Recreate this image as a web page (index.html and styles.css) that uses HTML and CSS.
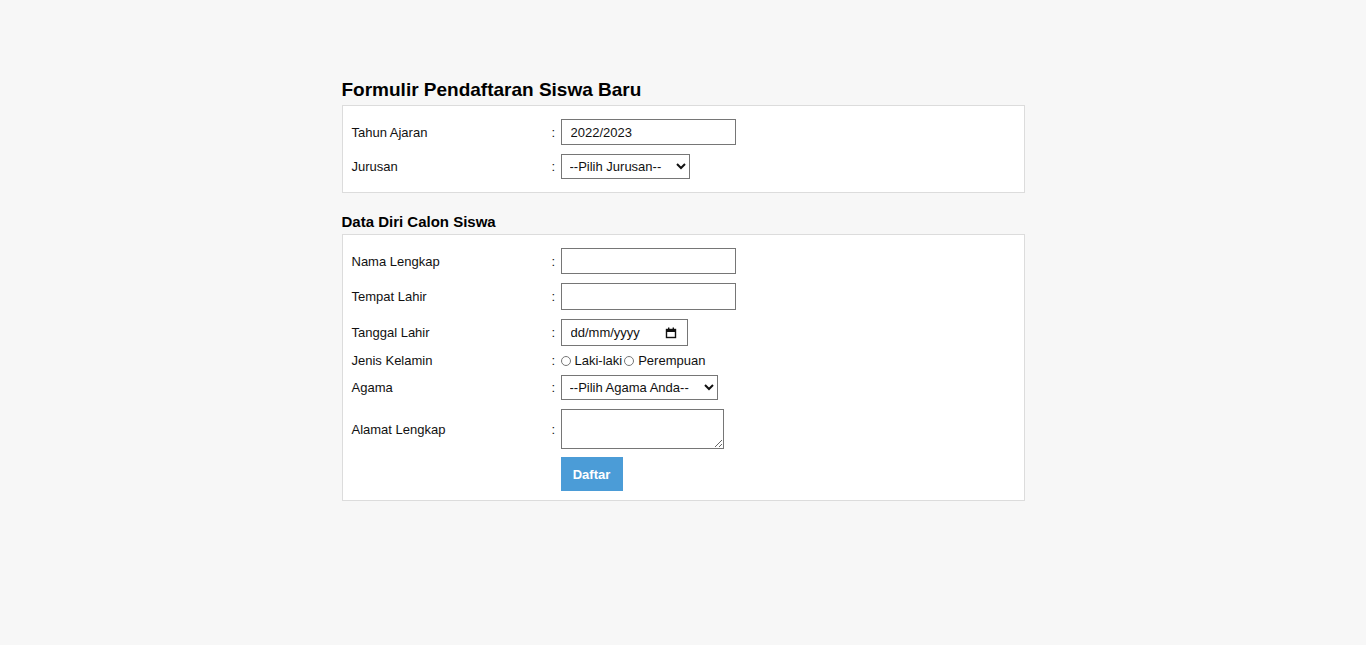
FILE: index.html
```html
<!DOCTYPE html>
<html lang="id">
<head>
<meta charset="utf-8">
<title>Formulir Pendaftaran Siswa Baru</title>
<link rel="stylesheet" href="styles.css">
</head>
<body>
<main class="page">
  <h1 class="title">Formulir Pendaftaran Siswa Baru</h1>
  <section class="panel panel-top">
    <div class="row">
      <span class="label">Tahun Ajaran</span><span class="colon">:</span>
      <input class="text" type="text" value="2022/2023">
    </div>
    <div class="row">
      <span class="label">Jurusan</span><span class="colon">:</span>
      <select class="select select-jurusan"><option>--Pilih Jurusan--</option></select>
    </div>
  </section>

  <h2 class="subtitle">Data Diri Calon Siswa</h2>
  <section class="panel panel-bottom">
    <div class="row">
      <span class="label">Nama Lengkap</span><span class="colon">:</span>
      <input class="text" type="text">
    </div>
    <div class="row">
      <span class="label">Tempat Lahir</span><span class="colon">:</span>
      <input class="text text-tall" type="text">
    </div>
    <div class="row">
      <span class="label">Tanggal Lahir</span><span class="colon">:</span>
      <span class="date">
        <input class="date-input" type="text" placeholder="dd/mm/yyyy">
        <svg class="cal" width="12" height="12" viewBox="0 0 12 12" aria-hidden="true">
          <rect x="1.5" y="2.5" width="9" height="8" fill="none" stroke="#111" stroke-width="1.4"/>
          <rect x="1" y="2" width="10" height="3" fill="#111"/>
          <rect x="3" y="0.5" width="1.4" height="2" fill="#111"/>
          <rect x="7.6" y="0.5" width="1.4" height="2" fill="#111"/>
        </svg>
      </span>
    </div>
    <div class="row row-radio">
      <span class="label">Jenis Kelamin</span><span class="colon">:</span>
      <span class="radios">
        <label class="radio"><input type="radio" name="jk"><span>Laki-laki</span></label>
        <label class="radio"><input type="radio" name="jk"><span>Perempuan</span></label>
      </span>
    </div>
    <div class="row">
      <span class="label">Agama</span><span class="colon">:</span>
      <select class="select select-agama"><option>--Pilih Agama Anda--</option></select>
    </div>
    <div class="row">
      <span class="label">Alamat Lengkap</span><span class="colon">:</span>
      <textarea class="area"></textarea>
    </div>
    <div class="row row-button">
      <span class="label"></span><span class="colon"></span>
      <button class="btn" type="button">Daftar</button>
    </div>
  </section>
</main>
</body>
</html>
```

FILE: styles.css
```css
html, body {
  margin: 0;
  padding: 0;
  background: #f7f7f7;
  font-family: "Liberation Sans", Arial, sans-serif;
  color: #111;
}

.page {
  width: 683px;
  margin: 0 auto;
  padding-top: 78px;
}

.title {
  margin: 0 0 4px 0;
  font-size: 19px;
  font-weight: bold;
  line-height: 23px;
  color: #000;
}

.subtitle {
  margin: 20px 0 3px 0;
  font-size: 15px;
  font-weight: bold;
  line-height: 18px;
  color: #000;
}

.panel {
  background: #fff;
  border: 1px solid #dcdcdc;
  padding: 13px 9px 12px 9px;
  display: flex;
  flex-direction: column;
  gap: 9px;
}

.panel-top {
  padding-bottom: 13px;
}

.panel-bottom {
  padding-bottom: 9px;
}

.row {
  display: grid;
  grid-template-columns: 200px 9px auto;
  align-items: center;
  justify-items: start;
  font-size: 13px;
  line-height: 15px;
}

.row-radio {
  height: 11px;
  align-items: start;
}

.row-radio > * {
  margin-top: -2px;
}

.row-button {
  margin-top: -1px;
}

.label,
.colon {
  color: #111;
}

.text {
  box-sizing: border-box;
  width: 175px;
  height: 26px;
  border: 1px solid #767676;
  border-radius: 0;
  padding: 0 9px;
  font-family: "Liberation Sans", Arial, sans-serif;
  font-size: 13px;
  color: #111;
  margin: 0;
  background: #fff;
}

.text-tall {
  height: 27px;
}

.date {
  box-sizing: border-box;
  width: 127px;
  height: 27px;
  border: 1px solid #767676;
  background: #fff;
  display: flex;
  align-items: center;
  position: relative;
}

.date-input {
  box-sizing: border-box;
  width: 100%;
  height: 100%;
  border: none;
  outline: none;
  padding: 0 24px 0 9px;
  margin: 0;
  font-family: "Liberation Sans", Arial, sans-serif;
  font-size: 13px;
  color: #111;
  background: transparent;
}

.date-input::placeholder {
  color: #111;
  opacity: 1;
}

.cal {
  position: absolute;
  right: 10px;
  top: 7px;
}

.select {
  box-sizing: border-box;
  height: 25px;
  border: 1px solid #767676;
  border-radius: 0;
  padding: 0 4px;
  font-family: "Liberation Sans", Arial, sans-serif;
  font-size: 13px;
  color: #111;
  background: #fff;
  margin: 0;
}

.select-jurusan {
  width: 129px;
}

.select-agama {
  width: 157px;
}

.radios {
  display: flex;
  align-items: center;
  gap: 2px;
  white-space: nowrap;
}

.radio {
  display: inline-flex;
  align-items: center;
  gap: 4px;
}

.radio input {
  width: 10px;
  height: 10px;
  margin: 0;
}

.area {
  box-sizing: border-box;
  width: 163px;
  height: 40px;
  border: 1px solid #767676;
  border-radius: 0;
  margin: 0;
  padding: 2px;
  font-family: "Liberation Sans", Arial, sans-serif;
  font-size: 13px;
  resize: both;
}

.btn {
  box-sizing: border-box;
  width: 62px;
  height: 34px;
  background: #4b9cd7;
  border: none;
  color: #fff;
  font-family: "Liberation Sans", Arial, sans-serif;
  font-size: 13px;
  font-weight: bold;
  margin: 0;
  padding: 0;
  cursor: pointer;
}
```
